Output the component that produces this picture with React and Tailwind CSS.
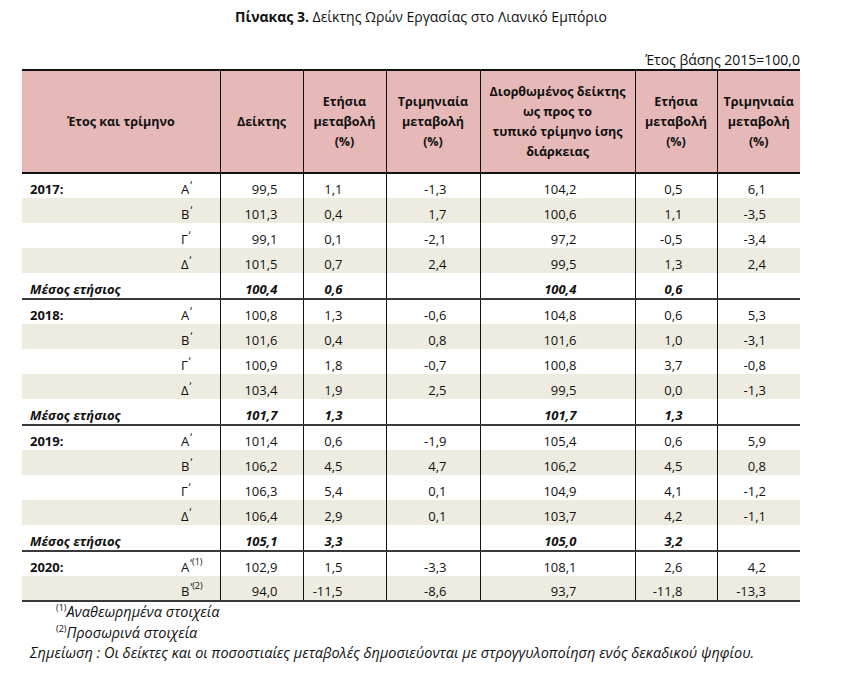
const blocks = [
  {
    year: '2017:',
    rows: [
      ['Α', null, '99,5', '1,1', '-1,3', '104,2', '0,5', '6,1'],
      ['Β', null, '101,3', '0,4', '1,7', '100,6', '1,1', '-3,5'],
      ['Γ', null, '99,1', '0,1', '-2,1', '97,2', '-0,5', '-3,4'],
      ['Δ', null, '101,5', '0,7', '2,4', '99,5', '1,3', '2,4'],
    ],
    avg: ['100,4', '0,6', '100,4', '0,6'],
  },
  {
    year: '2018:',
    rows: [
      ['Α', null, '100,8', '1,3', '-0,6', '104,8', '0,6', '5,3'],
      ['Β', null, '101,6', '0,4', '0,8', '101,6', '1,0', '-3,1'],
      ['Γ', null, '100,9', '1,8', '-0,7', '100,8', '3,7', '-0,8'],
      ['Δ', null, '103,4', '1,9', '2,5', '99,5', '0,0', '-1,3'],
    ],
    avg: ['101,7', '1,3', '101,7', '1,3'],
  },
  {
    year: '2019:',
    rows: [
      ['Α', null, '101,4', '0,6', '-1,9', '105,4', '0,6', '5,9'],
      ['Β', null, '106,2', '4,5', '4,7', '106,2', '4,5', '0,8'],
      ['Γ', null, '106,3', '5,4', '0,1', '104,9', '4,1', '-1,2'],
      ['Δ', null, '106,4', '2,9', '0,1', '103,7', '4,2', '-1,1'],
    ],
    avg: ['105,1', '3,3', '105,0', '3,2'],
  },
  {
    year: '2020:',
    rows: [
      ['Α', '(1)', '102,9', '1,5', '-3,3', '108,1', '2,6', '4,2'],
      ['Β', '(2)', '94,0', '-11,5', '-8,6', '93,7', '-11,8', '-13,3'],
    ],
  },
];

const numCls = [
  'pr-[25px]',
  'pr-[43px]',
  'pr-[33px]',
  'pr-[58px]',
  'pr-[34px]',
  'pr-[34px]',
];

function NumCells({ vals, bold }) {
  return vals.map((v, i) => (
    <td
      key={i}
      className={`align-bottom text-right ${numCls[i]} ${i < 5 ? 'border-r border-r-[#111]' : ''} ${bold ? 'font-bold italic' : ''}`}
    >
      {v}
    </td>
  ));
}

export default function App() {
  return (
    <div className="w-[842px] h-[700px] bg-white text-[#111] text-[13px]" style={{ fontFamily: '"Open Sans", "Noto Sans", sans-serif' }}>
      <div className="pt-[7px] text-center text-[14px] leading-[20px]">
        <span className="font-bold">Πίνακας 3.</span> Δείκτης Ωρών Εργασίας στο Λιανικό Εμπόριο
      </div>
      <div className="w-[800px] mt-[24px] text-right text-[14px] leading-[18px]">Έτος βάσης 2015=100,0</div>
      <table className="ml-[22px] w-[778px] table-fixed border-collapse leading-[17px]">
        <colgroup>
          <col className="w-[159px]" />
          <col className="w-[39px]" />
          <col className="w-[83px]" />
          <col className="w-[83px]" />
          <col className="w-[94px]" />
          <col className="w-[155px]" />
          <col className="w-[82px]" />
          <col className="w-[83px]" />
        </colgroup>
        <thead>
          <tr className="h-[103px] bg-[#e6b9b8] font-bold text-[12.5px] leading-[20px] text-center border-t-2 border-t-[#111] border-b-2 border-b-[#111]">
            <td colSpan={2} className="border-r border-r-[#111]">Έτος και τρίμηνο</td>
            <td className="border-r border-r-[#111]">Δείκτης</td>
            <td className="border-r border-r-[#111]">Ετήσια<br />μεταβολή<br />(%)</td>
            <td className="border-r border-r-[#111]">Τριμηνιαία<br />μεταβολή<br />(%)</td>
            <td className="border-r border-r-[#111]">Διορθωμένος δείκτης<br />ως προς το<br />τυπικό τρίμηνο ίσης<br />διάρκειας</td>
            <td className="border-r border-r-[#111]">Ετήσια<br />μεταβολή<br />(%)</td>
            <td>Τριμηνιαία<br />μεταβολή<br />(%)</td>
          </tr>
        </thead>
        {blocks.map((b) => (
          <tbody key={b.year} className="border-b-2 border-b-[#3a3a3a]">
            {b.rows.map((r, i) => (
              <tr key={i} className={`h-[25px] ${i % 2 === 1 ? 'bg-[#eeece1]' : 'bg-white'}`}>
                <td className="align-bottom pl-[8px] font-bold">{i === 0 ? b.year : ''}</td>
                <td className="align-bottom border-r border-r-[#111] whitespace-nowrap">
                  {r[0]}
                  <span className="relative -top-[5px] ml-[1px] text-[10px] leading-none">ʹ</span>
                  {r[1] && <span className="relative -top-[7px] text-[9px] leading-none">{r[1]}</span>}
                </td>
                <NumCells vals={r.slice(2)} />
              </tr>
            ))}
            {b.avg && (
              <tr className="h-[26px] bg-white">
                <td className="align-bottom pl-[8px] font-bold italic whitespace-nowrap">Μέσος ετήσιος</td>
                <td className="border-r border-r-[#111]"></td>
                <NumCells vals={[b.avg[0], b.avg[1], '', b.avg[2], b.avg[3], '']} bold />
              </tr>
            )}
          </tbody>
        ))}
      </table>
      <div className="italic text-[14.5px] leading-[20.5px]">
        <div className="pl-[56px]"><span className="relative -top-[6px] text-[9px] leading-none not-italic">(1)</span>Αναθεωρημένα στοιχεία</div>
        <div className="pl-[56px]"><span className="relative -top-[6px] text-[9px] leading-none not-italic">(2)</span>Προσωρινά στοιχεία</div>
        <div className="pl-[30px]">Σημείωση : Οι δείκτες και οι ποσοστιαίες μεταβολές δημοσιεύονται με στρογγυλοποίηση ενός δεκαδικού ψηφίου.</div>
      </div>
    </div>
  );
}
